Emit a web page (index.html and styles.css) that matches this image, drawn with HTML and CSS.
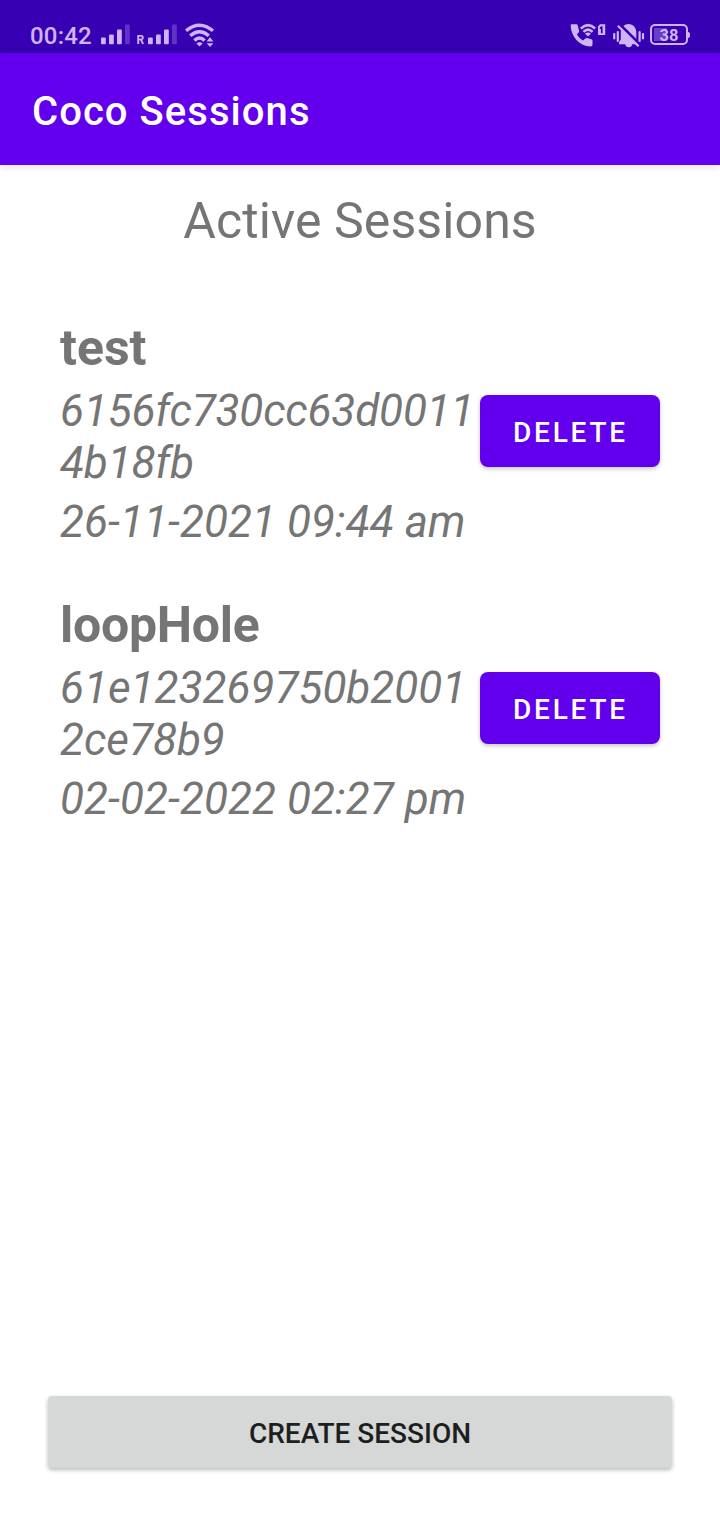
FILE: index.html
```html
<!DOCTYPE html>
<html lang="en">
<head>
<meta charset="utf-8">
<title>Coco Sessions</title>
<link rel="stylesheet" href="styles.css">
</head>
<body>
<div class="screen">
  <div class="status">
    <div class="status-left">
      <span class="clock">00:42</span>
      <svg class="signal" width="29" height="22" viewBox="0 0 29 22">
        <rect x="0" y="13.5" width="4.8" height="6.8" rx="1"/>
        <rect x="8" y="10.5" width="4.8" height="9.8" rx="1"/>
        <rect x="16" y="5.5" width="4.8" height="14.8" rx="1"/>
        <rect x="24" y="0.5" width="4.8" height="19.8" rx="1" opacity=".28"/>
      </svg>
      <span class="roaming">R</span>
      <svg class="signal" width="29" height="22" viewBox="0 0 29 22">
        <rect x="0" y="13.5" width="4.8" height="6.8" rx="1"/>
        <rect x="8" y="10.5" width="4.8" height="9.8" rx="1"/>
        <rect x="16" y="5.5" width="4.8" height="14.8" rx="1"/>
        <rect x="24" y="0.5" width="4.8" height="19.8" rx="1" opacity=".28"/>
      </svg>
      <svg class="wifi" width="30" height="24" viewBox="0 0 30 24">
        <g fill="none" stroke="currentColor" stroke-width="3.4">
          <path d="M1 7.8Q14.5-3.4 28 7.8"/>
          <path d="M5.2 12.7Q14.5 4.7 23.8 12.7"/>
          <path d="M9.4 17.4Q14.5 12.6 19.6 17.4"/>
        </g>
        <path d="M11.4 20.4Q14.5 17.9 17.6 20.4L14.5 23.4Z"/>
        <path d="M21.6 18.6L25 14.3L28.4 18.6ZM21.6 20.2L25 24L28.4 20.2Z"/>
      </svg>
    </div>
    <div class="status-right">
      <svg class="call" width="36" height="24" viewBox="0 0 36 24">
        <path d="M1.2 1.3Q.5 1.3.7 3C1.3 14 9.5 23.1 20.5 23.5Q22.5 23.5 22.5 21.6V17.6Q22.5 16.5 21.3 16.2L17 15Q16 14.8 15.4 15.4L13 17.6C10.3 16 8.3 14 6.9 11.3L8.7 9.4Q9.3 8.8 9.1 8L7.8 2.5Q7.4 1.3 6.4 1.3Z"/>
        <g fill="none" stroke="currentColor" stroke-width="2.6">
          <path d="M10.9 5.5Q18-1.1 25.1 5.5"/>
          <path d="M13.5 8.9Q18 4.4 22.5 8.9"/>
        </g>
        <path d="M15 10.8Q18 8 21 10.8L18 13.6Z"/>
        <path fill-rule="evenodd" d="M30 1.2H35.2V12H28V3.5ZM29.8 4.6V5.9H30.9V10.3H32.6V3.2H31.3Z"/>
      </svg>
      <svg class="bell" width="32" height="26" viewBox="0 0 32 26">
        <path d="M15.5 .9C20.2 1 23.3 4.6 23.3 9.5V16.2L25.3 19.2V21.2H19.2Q18.8 24.2 15.8 24.2Q12.8 24.2 12.2 21.2H6V19.2L7.8 16.2V9.5C7.8 4.6 11 1 15.5 .9Z"/>
        <path d="M6.2 .8L28 22.6" fill="none" stroke="#3700b3" stroke-width="2.8"/>
        <path d="M4.9 2.8L25.6 23.2" fill="none" stroke="currentColor" stroke-width="2.2"/>
        <path d="M1.2 11V15.5M4.8 9V18M26.6 9V18M30 11V15.5" fill="none" stroke="currentColor" stroke-width="2.2" stroke-linecap="round"/>
      </svg>
      <div class="battery"><span>38</span></div>
      <i class="battery-tip"></i>
    </div>
  </div>
  <header class="appbar"><h1>Coco Sessions</h1></header>
  <main class="content">
    <h2 class="heading">Active Sessions</h2>
    <ul class="sessions">
      <li class="session">
        <div class="details">
          <h3 class="name">test</h3>
          <p class="id id-tight">6156fc730cc63d00114b18fb</p>
          <p class="date">26-11-2021 09:44 am</p>
        </div>
        <button class="delete">DELETE</button>
      </li>
      <li class="session">
        <div class="details">
          <h3 class="name name-tight">loopHole</h3>
          <p class="id">61e123269750b20012ce78b9</p>
          <p class="date">02-02-2022 02:27 pm</p>
        </div>
        <button class="delete">DELETE</button>
      </li>
    </ul>
    <button class="create">CREATE SESSION</button>
  </main>
</div>
</body>
</html>
```
FILE: styles.css
```css
* { box-sizing: border-box; }
body, h1, h2, h3, p, ul { margin: 0; padding: 0; }
body { background: #fff; font-family: Roboto, "Liberation Sans", sans-serif; color: #757575; }
button { border: 0; padding: 0; font: 500 28px/33px Roboto, "Liberation Sans", sans-serif; }
svg { fill: currentColor; flex: none; }

.screen { width: 720px; height: 1520px; display: flex; flex-direction: column; overflow: hidden; }

.status { flex: none; height: 53px; padding: 22px 30px 0; display: flex; justify-content: space-between; background: #3700b3; color: #cfb5f7; }
.status-left, .status-right { display: flex; align-items: flex-start; }
.clock { width: 71px; font-size: 24px; font-weight: 500; line-height: 28px; letter-spacing: .2px; white-space: nowrap; }
.signal { margin-top: 2px; }
.roaming { width: 18px; padding-left: 6.5px; margin-top: 11px; font-size: 12px; font-weight: 700; line-height: 14px; }
.wifi { margin: 1px 0 0 8px; }
.call { margin-top: 1px; }
.bell { margin: 1px 0 0 7px; }
.battery { width: 38px; height: 21px; margin: 2px 0 0 5px; border: 2px solid currentColor; border-radius: 5px; text-align: center; background: linear-gradient(#6b3bc9, #6b3bc9) 2px 2px / 13px 13px no-repeat; }
.battery span { display: block; padding-top: 1px; font-size: 16.5px; font-weight: 700; line-height: 18px; }
.battery-tip { width: 2px; height: 6px; margin: 10px 0 0; border-radius: 0 2px 2px 0; background: currentColor; }

.appbar { flex: none; height: 112px; padding: 35px 32px 0; background: #6200ee; box-shadow: 0 1px 8px rgba(0, 0, 0, .16); }
.appbar h1 { color: #fff; font-size: 40px; line-height: 47px; font-weight: 500; letter-spacing: 1.05px; }

.content { flex: 1; display: flex; flex-direction: column; padding: 27px 48px 52px; }
.heading { font-size: 50px; line-height: 59px; font-weight: 400; letter-spacing: .1px; text-align: center; }
.sessions { list-style: none; padding: 67px 12px 0; display: flex; flex-direction: column; gap: 47px; flex: 1; }
.session { display: flex; align-items: center; height: 230px; }
.details { width: 420px; }
.name { padding-top: 1px; font-size: 50px; line-height: 59px; font-weight: 700; }
.name-tight { letter-spacing: -.25px; }
.id, .date { font-size: 44px; line-height: 52px; font-style: italic; margin-top: 7px; overflow-wrap: anywhere; }
.id-tight { letter-spacing: -.15px; }
.date { letter-spacing: .07px; white-space: nowrap; }
.delete { width: 180px; height: 72px; margin-bottom: 4px; border-radius: 8px; padding: 2px 0 0 1px; background: #6200ee; color: #fff; letter-spacing: 2.8px; box-shadow: 0 2px 4px rgba(0, 0, 0, .22); }
.create { height: 72px; padding-top: 2px; border-radius: 4px; background: #d6d7d7; color: #1d1e1e; box-shadow: 0 2px 4px rgba(0, 0, 0, .28); }
```
